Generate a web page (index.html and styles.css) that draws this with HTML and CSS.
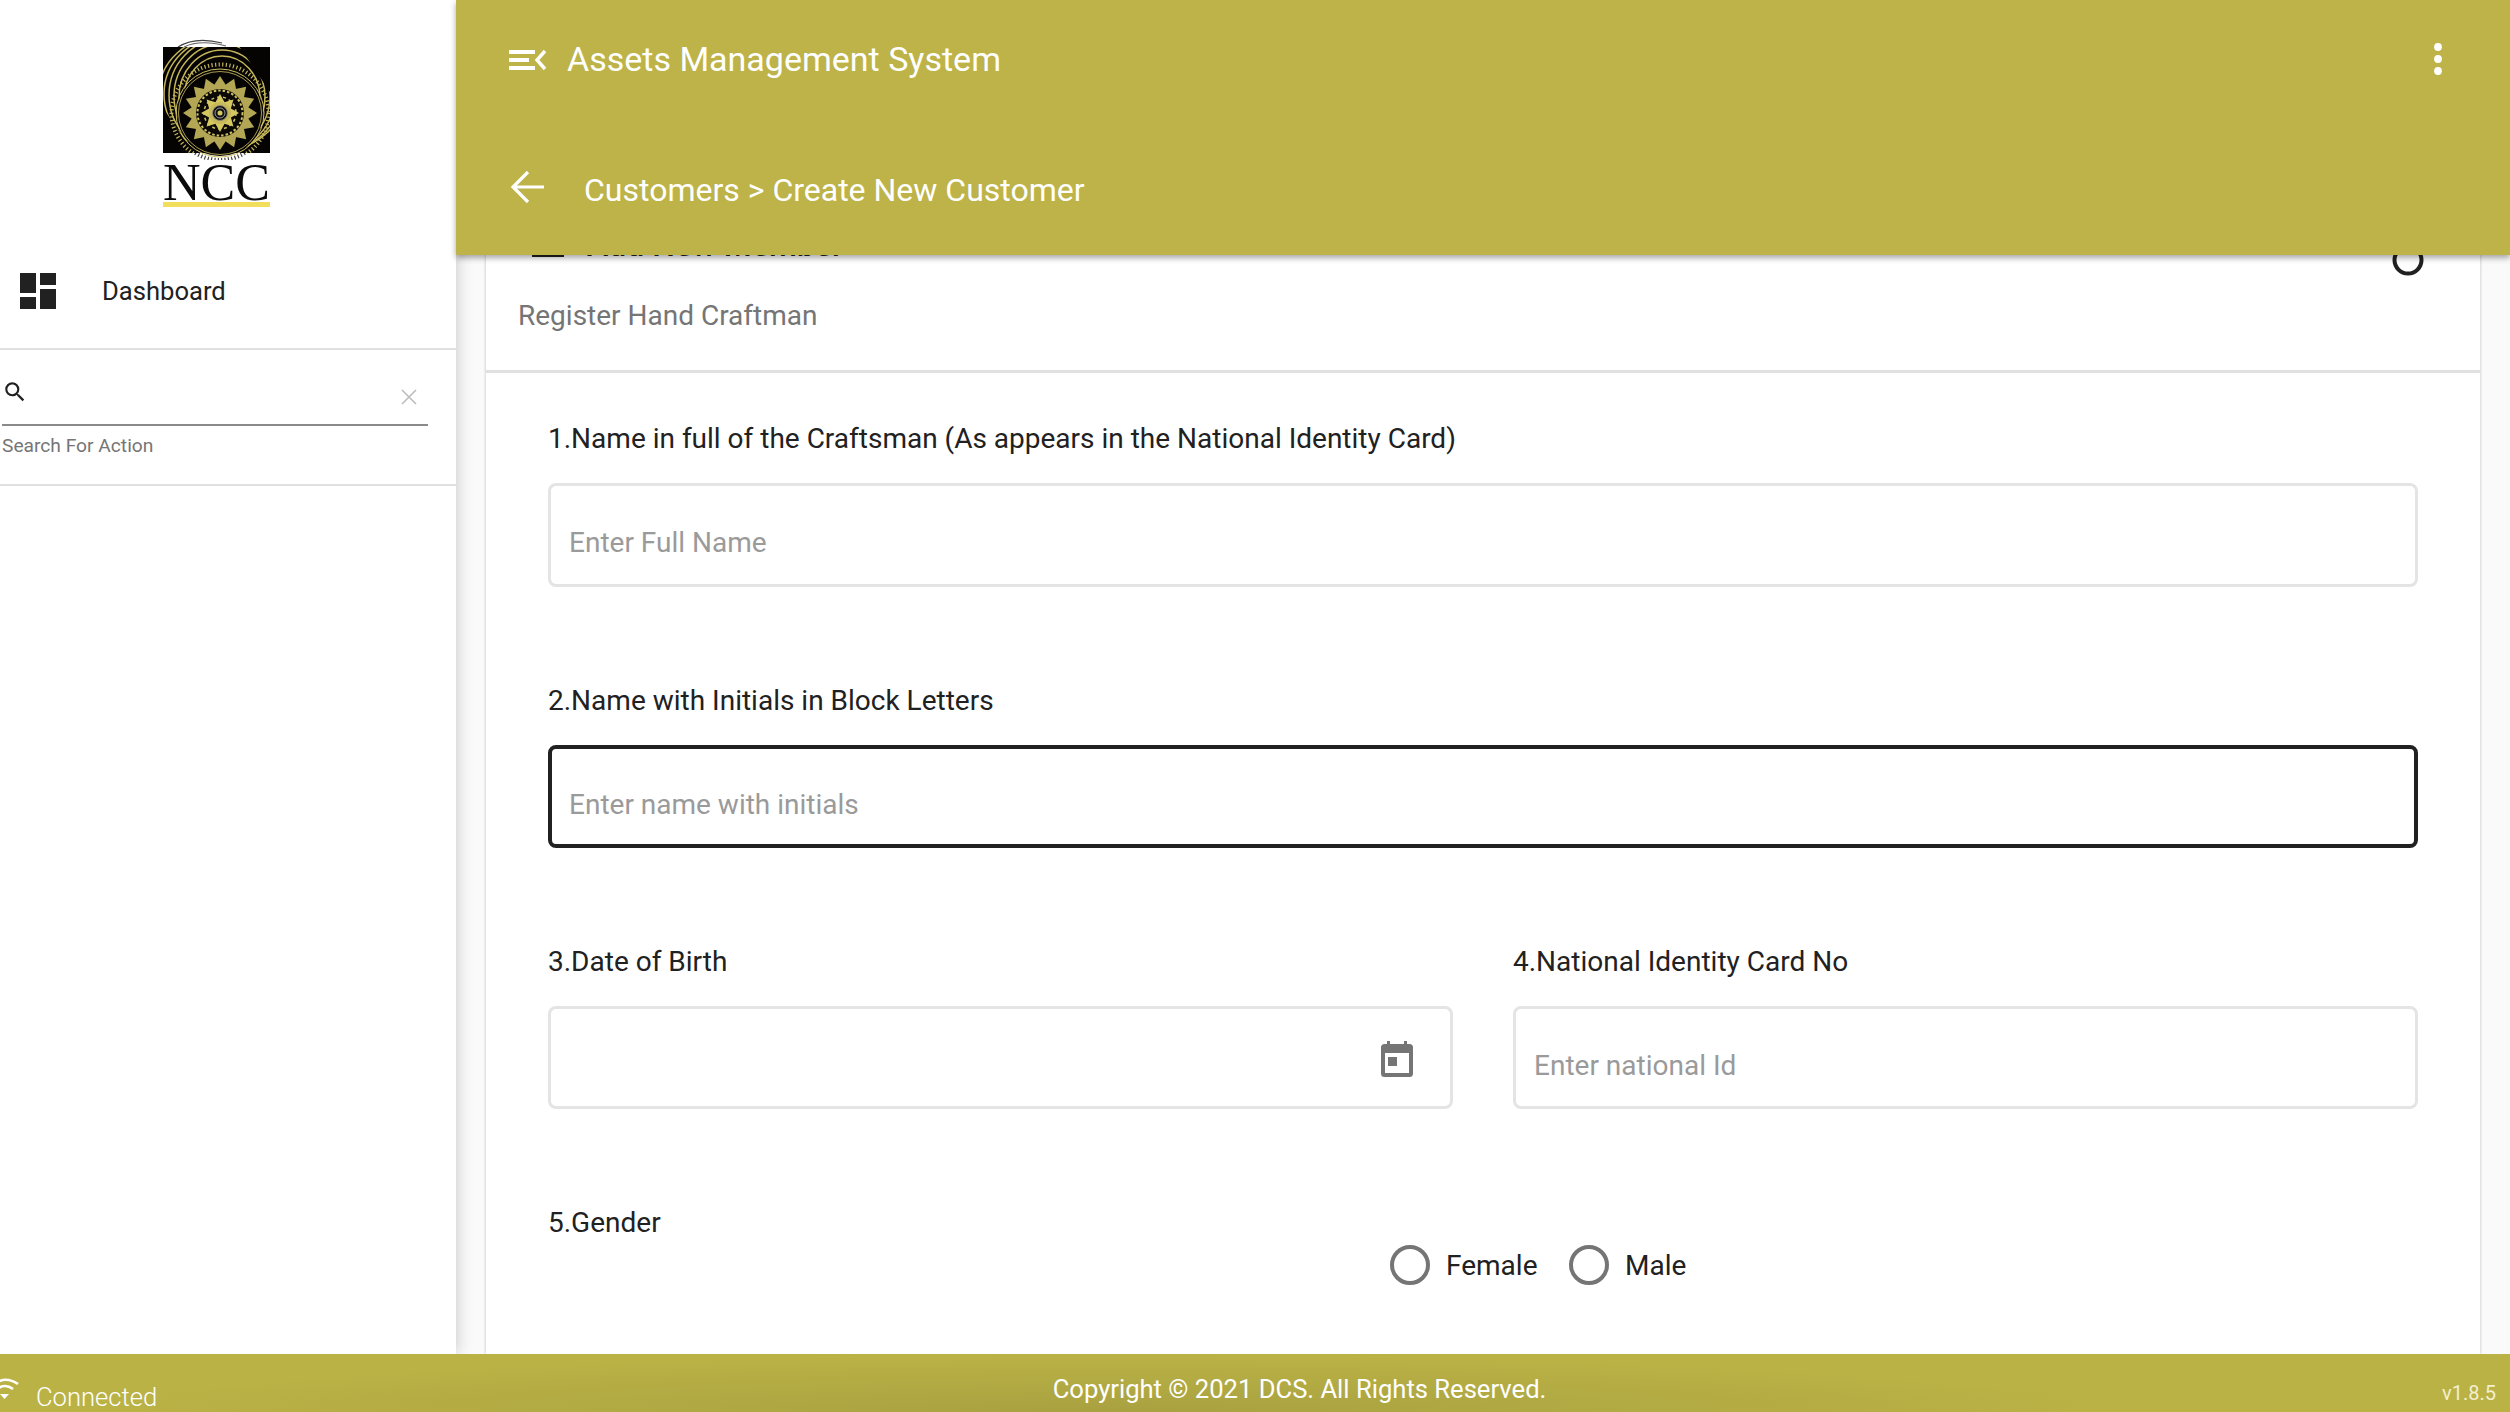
FILE: index.html
```html
<!DOCTYPE html>
<html lang="en">
<head>
<meta charset="utf-8">
<title>Assets Management System</title>
<link rel="stylesheet" href="styles.css">
</head>
<body>
<div class="app">
  <div class="upper">
    <aside class="sidebar">
      <div class="brand">
        <svg class="logo-art" width="130" height="122" viewBox="150 38 130 122" aria-hidden="true">
          <defs>
            <clipPath id="sq"><rect x="163" y="47" width="107" height="106"/></clipPath>
            <clipPath id="above"><rect x="150" y="30" width="130" height="17"/></clipPath>
            <clipPath id="below"><rect x="150" y="153" width="130" height="12"/></clipPath>
            <clipPath id="prints-area"><path d="M150 30H228L270 92V170H205L163 108H150Z"/></clipPath>
            <polygon id="petal" points="0,-37 6.5,-27 -6.5,-27" fill="#b3a755"/>
            <polygon id="petal2" points="0,-19 5,-10 -5,-10" fill="#d6c860"/>
            <g id="prints" fill="none" stroke-width="1.5">
              <ellipse cx="222" cy="98" rx="38" ry="42"/>
              <ellipse cx="222" cy="97" rx="43" ry="47"/>
              <ellipse cx="222" cy="96" rx="48" ry="52"/>
              <ellipse cx="222" cy="95" rx="53" ry="56"/>
              <ellipse cx="222" cy="94" rx="58" ry="57"/>
              <ellipse cx="222" cy="93" rx="63" ry="57"/>
            </g>
          </defs>
          <rect x="163" y="47" width="107" height="106" fill="#050403"/>
          <g clip-path="url(#sq)"><g clip-path="url(#prints-area)"><use href="#prints" stroke="#c4b55a"/></g></g>
          <g clip-path="url(#above)"><path d="M178 47Q195 36 222 43" fill="none" stroke="#444" stroke-width="1.2"/><path d="M184 47Q200 39 226 46" fill="none" stroke="#666" stroke-width="1.2"/></g>
          <circle cx="220" cy="113" r="43" fill="#050403"/>
          <circle cx="220" cy="113" r="44" fill="none" stroke="#cfc062" stroke-width="1"/>
          <circle cx="220" cy="113" r="41.5" fill="none" stroke="#cfc062" stroke-width=".8"/>
          <g transform="translate(220 113)">
            <use href="#petal"/><use href="#petal" transform="rotate(22.5)"/><use href="#petal" transform="rotate(45)"/><use href="#petal" transform="rotate(67.5)"/><use href="#petal" transform="rotate(90)"/><use href="#petal" transform="rotate(112.5)"/><use href="#petal" transform="rotate(135)"/><use href="#petal" transform="rotate(157.5)"/><use href="#petal" transform="rotate(180)"/><use href="#petal" transform="rotate(202.5)"/><use href="#petal" transform="rotate(225)"/><use href="#petal" transform="rotate(247.5)"/><use href="#petal" transform="rotate(270)"/><use href="#petal" transform="rotate(292.5)"/><use href="#petal" transform="rotate(315)"/><use href="#petal" transform="rotate(337.5)"/>
            <circle r="28" fill="#b3a755"/>
            <circle r="24" fill="#0a0906"/>
            <circle r="22.5" fill="none" stroke="#cfc062" stroke-width="2" stroke-dasharray="2.5 2"/>
            <circle r="16" fill="none" stroke="#cfc062" stroke-width="1.5" stroke-dasharray="3 3"/>
            <use href="#petal2"/><use href="#petal2" transform="rotate(45)"/><use href="#petal2" transform="rotate(90)"/><use href="#petal2" transform="rotate(135)"/><use href="#petal2" transform="rotate(180)"/><use href="#petal2" transform="rotate(225)"/><use href="#petal2" transform="rotate(270)"/><use href="#petal2" transform="rotate(315)"/>
            <circle r="11" fill="#c7b95c"/>
            <circle r="7.5" fill="#111" stroke="#8d8a70" stroke-width="1"/>
            <circle r="5" fill="none" stroke="#999" stroke-width="1"/>
            <circle r="2.5" fill="#d6c860"/>
          </g>
          <g clip-path="url(#sq)"><circle cx="220" cy="113" r="48.5" fill="none" stroke="#c4b55a" stroke-width="4" stroke-dasharray="1.2 2.4"/></g>
          <g clip-path="url(#below)"><circle cx="220" cy="113" r="47" fill="none" stroke="#444" stroke-width="4" stroke-dasharray="1.2 2.2"/></g>
        </svg>
        <div class="logo-name">NCC</div>
        <div class="logo-rule"></div>
      </div>
      <nav class="nav-row">
        <svg class="dash-icon" width="36" height="36" viewBox="3 3 18 18" aria-hidden="true"><path fill="#212121" d="M3 13h8V3H3v10zm0 8h8v-6H3v6zm10 0h8V11h-8v10zm0-18v6h8V3h-8z"/></svg>
        <span class="nav-label">Dashboard</span>
      </nav>
      <div class="search-block">
        <div class="search-field">
          <svg class="search-icon" width="26" height="26" viewBox="0 0 24 24" aria-hidden="true"><path fill="#212121" d="M15.5 14h-.79l-.28-.27A6.47 6.47 0 0 0 16 9.5 6.5 6.5 0 1 0 9.5 16c1.61 0 3.09-.59 4.23-1.57l.27.28v.79l5 4.99L20.49 19l-4.99-5zm-6 0C7.01 14 5 11.99 5 9.5S7.01 5 9.5 5 14 7.01 14 9.5 11.99 14 9.5 14z"/></svg>
          <svg class="clear-icon" width="16" height="16" viewBox="0 0 16 16" aria-hidden="true"><path d="M1 1l14 14M15 1L1 15" stroke="#bdbdbd" stroke-width="1.6" fill="none"/></svg>
        </div>
        <div class="search-hint">Search For Action</div>
      </div>
    </aside>
    <main class="content">
      <header class="appbar">
        <div class="bar-top">
          <svg class="menu-icon" width="38" height="26" viewBox="0 0 38 26" aria-hidden="true"><path d="M0 3h26v4H0zM0 11h20v4H0zM0 19h26v4H0z" fill="#fff"/><path d="M36 4l-8 9 8 9" fill="none" stroke="#fff" stroke-width="3.4"/></svg>
          <span class="app-title">Assets Management System</span>
          <svg class="more-icon" width="8" height="32" viewBox="0 0 8 32" aria-hidden="true"><circle cx="4" cy="4" r="3.9" fill="#fff"/><circle cx="4" cy="16" r="3.9" fill="#fff"/><circle cx="4" cy="28" r="3.9" fill="#fff"/></svg>
        </div>
        <div class="bar-sub">
          <svg class="back-icon" width="36" height="34" viewBox="0 0 36 34" aria-hidden="true"><path d="M34 17H4M18 2L3 17l15 15" fill="none" stroke="#fff" stroke-width="3.2"/></svg>
          <span class="crumb">Customers &gt; Create New Customer</span>
        </div>
      </header>
      <section class="card">
        <div class="card-top">
          <div class="card-title-row">
            <svg class="title-icon" width="32" height="34" viewBox="0 0 32 34" aria-hidden="true"><path d="M0 28h32v4H0z" fill="#212121"/></svg>
            <span class="card-title">Add New Member</span>
            <svg class="spin-icon" width="36" height="36" viewBox="0 0 36 36" aria-hidden="true"><circle cx="18" cy="18" r="13.5" fill="none" stroke="#212121" stroke-width="4"/></svg>
          </div>
          <div class="card-sub">Register Hand Craftman</div>
        </div>
        <form class="form">
          <div class="field field-first">
            <label class="label">1.Name in full of the Craftsman (As appears in the National Identity Card)</label>
            <div class="box box-tall"><span class="ph">Enter Full Name</span></div>
          </div>
          <div class="field">
            <label class="label">2.Name with Initials in Block Letters</label>
            <div class="box box-focus"><span class="ph">Enter name with initials</span></div>
          </div>
          <div class="two">
            <div class="field">
              <label class="label">3.Date of Birth</label>
              <div class="box box-date">
                <svg class="cal-icon" width="32" height="36" viewBox="0 0 32 36" aria-hidden="true"><path fill="#757575" d="M6 0h3v3h14V0h3v3h2.5A3.5 3.5 0 0 1 32 6.5V32.5A3.5 3.5 0 0 1 28.5 36h-25A3.5 3.5 0 0 1 0 32.5V6.5A3.5 3.5 0 0 1 3.5 3H6zM4 12v20h24V12zM7 16h9v9H7z" fill-rule="evenodd"/></svg>
              </div>
            </div>
            <div class="field">
              <label class="label">4.National Identity Card No</label>
              <div class="box"><span class="ph">Enter national Id</span></div>
            </div>
          </div>
          <div class="gender">
            <label class="label">5.Gender</label>
            <div class="radios">
              <span class="radio"></span><span class="radio-text">Female</span>
              <span class="radio"></span><span class="radio-text">Male</span>
            </div>
          </div>
        </form>
      </section>
    </main>
  </div>
  <footer class="footer">
    <div class="status">
      <svg class="wifi-icon" width="22" height="22" viewBox="0 0 22 22" aria-hidden="true"><path d="M-4 5Q6-2 18 6M-3 11Q5 5 13 11" fill="none" stroke="#fff" stroke-width="2.6"/><path d="M0 16h9l-4.500 5z" fill="#fff"/></svg>
      <span class="status-text">Connected</span>
    </div>
    <div class="copy">Copyright © 2021 DCS. All Rights Reserved.</div>
    <div class="version">v1.8.5</div>
  </footer>
</div>
</body>
</html>
```

FILE: styles.css
```css
* { box-sizing: border-box; }
html, body { margin: 0; padding: 0; height: 100%; }
body { font-family: Roboto, "Liberation Sans", sans-serif; background: #fafafa; overflow: hidden; }
.app { width: 2510px; height: 1412px; display: flex; flex-direction: column; overflow: hidden; }
.upper { flex: 1; min-height: 0; display: flex; }

.sidebar { width: 456px; flex: none; background: #fff; display: flex; flex-direction: column; box-shadow: 0 0 16px rgba(0,0,0,.22); position: relative; z-index: 1; }
.brand { height: 251px; padding-top: 38px; padding-left: 150px; display: flex; flex-direction: column; }
.logo-art { display: block; flex: none; }
.logo-name { font-family: "Liberation Serif", serif; font-size: 52px; line-height: 36px; margin-top: 5px; width: 130px; padding-left: 13px; color: #0b0b0b; }
.logo-rule { width: 107px; height: 5px; background: #f0de5c; margin-left: 13px; margin-top: 1px; }
.nav-row { height: 99px; display: flex; align-items: center; padding-left: 20px; border-bottom: 2px solid #e0e0e0; padding-bottom: 18px; }
.nav-label { margin-left: 46px; font-size: 25.6px; color: #212121; }
.search-block { height: 136px; border-bottom: 2px solid #e0e0e0; padding-left: 2px; padding-top: 26px; }
.search-field { width: 426px; height: 50px; border-bottom: 2px solid #8a8a8a; display: flex; justify-content: space-between; align-items: flex-start; }
.search-icon { margin-top: 3px; }
.clear-icon { margin-top: 13px; margin-right: 11px; }
.search-hint { font-size: 19.2px; color: #757575; margin-top: 8px; }

.content { flex: 1; min-width: 0; display: flex; flex-direction: column; position: relative; padding: 0 30px; }
.appbar { height: 255px; background: #bdb348; margin: 0 -30px; box-shadow: 0 3px 6px rgba(0,0,0,.35); position: relative; z-index: 2; color: #fff; flex: none; }
.bar-top { height: 118px; display: flex; align-items: center; padding: 0 68px 0 53px; }
.menu-icon { flex: none; margin-top: 2px; }
.app-title { font-size: 34px; margin-left: 20px; flex: 1; }
.more-icon { flex: none; }
.bar-sub { height: 137px; display: flex; align-items: flex-start; padding: 52px 0 0 54px; }
.crumb { font-size: 32px; margin-left: 38px; line-height: 38px; margin-top: 1px; }

.card { flex: 1; background: #fff; box-shadow: 0 0 3px rgba(0,0,0,.25); margin-top: -55px; min-height: 0; overflow: hidden; }
.card-top { height: 173px; border-bottom: 3px solid #e0e0e0; }
.card-title-row { height: 96px; display: flex; align-items: flex-start; padding: 25px 54px 0 46px; }
.title-icon { flex: none; }
.card-title { font-size: 32px; font-weight: 500; color: #212121; margin-left: 23px; flex: 1; line-height: 40px; }
.spin-icon { flex: none; margin-top: 17px; }
.card-sub { font-size: 28px; color: #757575; padding-left: 32px; line-height: 40px; }

.form { padding: 48px 62px 0; }
.field { height: 261px; }
.field-first { height: 262px; }
.label { display: block; font-size: 28px; color: #212121; line-height: 36px; margin-bottom: 26px; }
.box { height: 103px; border: 3px solid #e4e4e4; border-radius: 8px; display: flex; align-items: center; padding: 15px 18px 0; }
.box-tall { height: 104px; }
.box-focus { border: 4px solid #212121; padding: 15px 17px 0; }
.ph { font-size: 28px; color: #9a9a9a; }
.two { display: grid; grid-template-columns: 905px 905px; column-gap: 60px; }
.box-date { justify-content: flex-end; padding: 3px 37px 0 0; }
.radios { display: flex; align-items: center; height: 40px; padding-left: 842px; margin-top: -22px; }
.radio { width: 40px; height: 40px; border: 4px solid #757575; border-radius: 50%; flex: none; }
.radio-text { font-size: 28px; color: #212121; margin-left: 16px; width: 123px; }

.footer { height: 58px; flex: none; background: radial-gradient(ellipse 1000px 56px at 44% 100%, #a9a140 0, #bab245 100%); position: relative; z-index: 3; color: #fff; display: grid; grid-template-columns: 1fr auto 1fr; align-items: start; }
.status { display: flex; align-items: flex-start; padding-top: 24px; overflow: hidden; }
.wifi-icon { flex: none; }
.status-text { font-size: 25.6px; margin-left: 14px; line-height: 34px; font-weight: 300; margin-top: 2px; }
.copy { font-size: 25.6px; line-height: 34px; padding-top: 18px; margin-left: 89px; }
.version { font-size: 20px; text-align: right; padding: 26px 14px 0 0; line-height: 26px; color: #f3efcf; }
```
